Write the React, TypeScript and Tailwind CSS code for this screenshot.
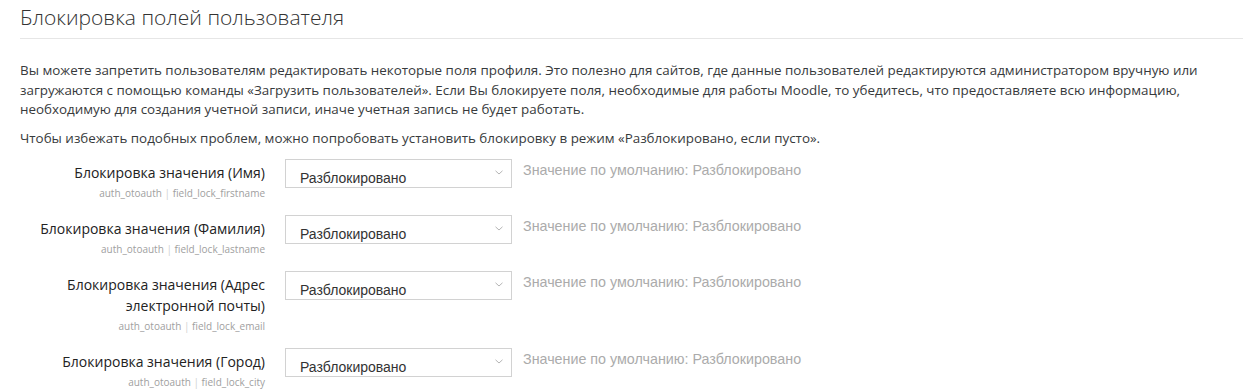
const ROWS = [
  { label: ["Блокировка значения (Имя)"], key: "field_lock_firstname" },
  { label: ["Блокировка значения (Фамилия)"], key: "field_lock_lastname" },
  { label: ["Блокировка значения (Адрес", "электронной почты)"], key: "field_lock_email" },
  { label: ["Блокировка значения (Город)"], key: "field_lock_city" },
];

function Chevron() {
  return (
    <svg width="8" height="5" viewBox="0 0 8 5" className="block">
      <path d="M0.5 0.8 L4 4 L7.5 0.8" fill="none" stroke="#b5b5b5" strokeWidth="1" />
    </svg>
  );
}

function SettingRow({ label, settingKey }: { label: string[]; settingKey: string }) {
  return (
    <div className="flex items-start mb-[15px]">
      {/* Label */}
      <div className="w-[245px] shrink-0 text-right pt-[3px]">
        <div className="text-[14px] leading-[21px] text-[#222]">
          {label.map((l, i) => (
            <div key={i}>{l}</div>
          ))}
        </div>
        <div className="mt-[3px] text-[10px] leading-[14px] text-[#a0a0a0]">
          auth_otoauth <span className="text-[#cfcfcf]">|</span> {settingKey}
        </div>
      </div>

      {/* Select */}
      <div className="ml-[20px] w-[227px] h-[29px] shrink-0 border border-[#d2d2d2] bg-white flex items-start justify-between pl-[14px] pr-[8px]">
        <span className="pt-[10px] text-[14px] leading-[16px] text-[#333] font-['Liberation_Sans',Arial,sans-serif]">
          Разблокировано
        </span>
        <span className="pt-[10px]">
          <Chevron />
        </span>
      </div>

      {/* Default */}
      <div className="ml-[11px] pt-[1px] text-[14.3px] leading-[20px] text-[#ababab] font-['Liberation_Sans',Arial,sans-serif]">
        Значение по умолчанию: Разблокировано
      </div>
    </div>
  );
}

export default function App() {
  return (
    <div className="min-h-screen bg-white font-['Open_Sans',sans-serif]">
      <div className="ml-[20px] mr-[7px]">
        {/* Heading */}
        <h2 className="pt-[5px] pb-[8px] text-[21px] leading-[25px] font-light text-[#333] border-b border-[#e6e6e6]">
          Блокировка полей пользователя
        </h2>

        {/* Description */}
        <div className="mt-[22px] text-[13.4px] leading-[19.5px] text-[#373a3c]">
          <p className="mb-[9px]">
            Вы можете запретить пользователям редактировать некоторые поля профиля. Это полезно для сайтов, где данные пользователей редактируются администратором вручную или
            <br />
            загружаются с помощью команды «Загрузить пользователей». Если Вы блокируете поля, необходимые для работы Moodle, то убедитесь, что предоставляете всю информацию,
            <br />
            необходимую для создания учетной записи, иначе учетная запись не будет работать.
          </p>
          <p className="mb-[11px]">
            Чтобы избежать подобных проблем, можно попробовать установить блокировку в режим «Разблокировано, если пусто».
          </p>
        </div>

        {/* Settings */}
        <div>
          {ROWS.map((r) => (
            <SettingRow key={r.key} label={r.label} settingKey={r.key} />
          ))}
        </div>
      </div>
    </div>
  );
}
